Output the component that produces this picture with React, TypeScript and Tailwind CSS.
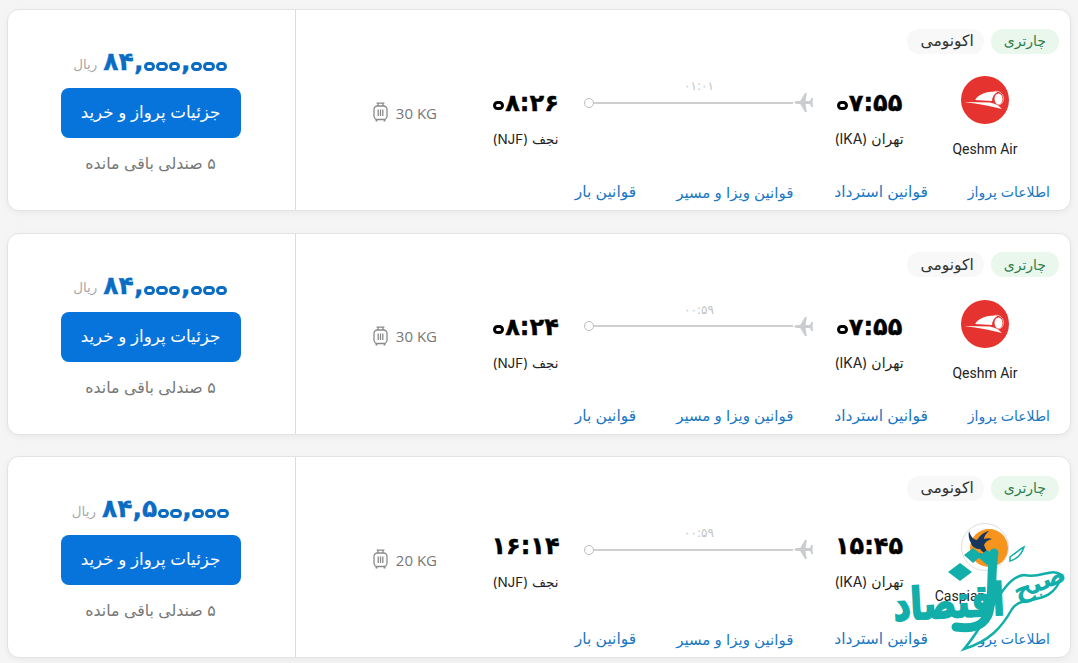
import React from "react";

const FONT = "font-['Inter','DejaVu_Sans',sans-serif]";

function Luggage() {
  return (
    <svg width="15" height="21" viewBox="0 0 15 21" fill="none" stroke="#8a8a8a" strokeWidth="1.3">
      <path d="M5 4V1.2h5V4M3.6 1.2h7.8" />
      <rect x="1" y="4" width="13" height="13.5" rx="3.5" />
      <path d="M5.2 7.5v6.5M7.5 7.5v6.5M9.8 7.5v6.5" />
      <path d="M3.5 17.5v2M11.5 17.5v2" strokeWidth="1.8" />
    </svg>
  );
}

function Plane() {
  return (
    <svg width="20" height="19" viewBox="0 0 20 19" fill="#c9cdcf">
      <path d="M0 9.5C1 8.3 3 8 5 8h1.200L11 0h1.800l-1.300 8H16l1.500-3H19l-.5 4.500.5 4.500h-1.500L16 11h-4.500l1.300 8H11l-4.800-8H5C3 11 1 10.700 0 9.500z" />
    </svg>
  );
}

function QeshmLogo() {
  return (
    <svg width="48" height="48" viewBox="0 0 48 48">
      <circle cx="24" cy="24" r="24" fill="#e5332f" />
      <path d="M14 24C18 18 25 15 37 15.500 33 18 31 21 31 25z" fill="#fff" />
      <ellipse cx="37.500" cy="23" rx="4" ry="5.500" fill="#fff" />
      <path d="M33 15.500c6-1.500 10 3 9.500 8-.4 3.500-3 6-6.500 5.500" fill="none" stroke="#f8b4b0" strokeWidth="1" />
      <path d="M3 26l26 .5c5 1 9 3 12 6.500C28 29.500 15 27.500 3 26z" fill="#fff" />
    </svg>
  );
}

function CaspianLogo() {
  return (
    <svg width="48" height="48" viewBox="0 0 48 48">
      <circle cx="24" cy="24" r="23.500" fill="#fff" stroke="#dedede" />
      <circle cx="28" cy="25" r="19" fill="#f7941d" />
      <path d="M8 8c2 5 3 8 8 9 2-3 6-8 12-9-3 3-5 5-5 8 3-1 6-1 8 0-4 1-7 3-8 6 1 4 4 7 6 10-5-1-8-3-10-6-4 0-8-2-9-6-2-3-3-8-2-12z" fill="#17375e" />
      <path d="M19 30l10 7-2 2-10-6z" fill="#17375e" />
    </svg>
  );
}

function Digits({ text, big }: { text: string; big?: boolean }) {
  return (
    <span className="inline-flex items-end" dir="ltr">
      {Array.from(text).map((c, i) =>
        c === "۰" ? (
          <span
            key={i}
            className={
              big
                ? "mx-[0.5px] mb-[6px] flex h-[9px] w-[11.5px] items-center justify-center overflow-hidden rounded-full border-[3px] border-[#0b6cc4] text-[5px] leading-none text-transparent [-webkit-text-stroke:0]"
                : "mx-[1px] mb-[7px] flex h-[9px] w-[11px] items-center justify-center overflow-hidden rounded-full border-[3px] border-black text-[5px] leading-none text-transparent [-webkit-text-stroke:0]"
            }
          >
            ۰
          </span>
        ) : (
          <span key={i}>{c}</span>
        )
      )}
    </span>
  );
}

type Flight = {
  price: string;
  kg: string;
  arr: string;
  dep: string;
  dur: string;
  airline: string;
  logo: React.ReactNode;
  mt: string;
};

function Card({ f }: { f: Flight }) {
  return (
    <div className={`flex h-[202px] flex-row-reverse rounded-xl border border-[#e3e3e3] bg-white shadow-[0_2px_6px_rgba(0,0,0,0.05)] ${f.mt}`} dir="ltr">
      <div className="flex min-w-0 flex-1 flex-col pr-[20px] pl-[76px] pt-[18px]" dir="rtl">
        <div className="-mr-[9px] flex h-[26px] items-center gap-[7px] leading-none">
          <span className="flex h-[25px] items-center rounded-[12px] bg-[#e9f7ec] px-[13px] text-[14px] text-[#2f7d4f]">چارتری</span>
          <span className="flex h-[25px] items-center rounded-[12px] bg-[#f8f8f8] pr-[10px] pl-[13px] text-[15.5px] text-[#333]">اکونومی</span>
        </div>
        <div className="mt-[22px] flex h-[95px] items-start pr-[32px]">
          <div className="flex w-[66px] flex-col items-center">
            {f.logo}
            <div className="mt-[16px] whitespace-nowrap font-['Roboto',sans-serif] text-[14px] leading-[18px] text-[#222]" dir="ltr">{f.airline}</div>
          </div>
          <div className="mr-[47px] flex w-[72px] flex-col items-center pt-[9px]">
            <div className="font-['DejaVu_Sans',sans-serif] text-[24px] font-bold leading-[28px] text-black [-webkit-text-stroke:0.4px_#000]"><Digits text={f.dep} /></div>
            <div className="mt-[13px] whitespace-nowrap text-[14px] leading-[18px] text-[#222]">تهران (IKA)</div>
          </div>
          <div className="mr-[19px] flex w-[230px] flex-col pt-[3px]">
            <div className="text-center font-['DejaVu_Sans',sans-serif] text-[12px] leading-[14px] text-[#c4c4c4]" dir="ltr">{f.dur}</div>
            <div className="flex items-center" dir="ltr">
              <span className="h-[10px] w-[10px] shrink-0 rounded-full border border-[#bdbdbd]" />
              <span className="mr-[1px] h-[2px] flex-1 bg-[#cfcfcf]" />
              <Plane />
            </div>
          </div>
          <div className="mr-[26px] flex w-[65px] flex-col items-center pt-[9px]">
            <div className="font-['DejaVu_Sans',sans-serif] text-[24px] font-bold leading-[28px] text-black [-webkit-text-stroke:0.4px_#000]"><Digits text={f.arr} /></div>
            <div className="mt-[13px] whitespace-nowrap text-[13.5px] leading-[18px] text-[#222]">نجف (NJF)</div>
          </div>
          <div className="mr-[56px] flex items-center gap-[8px] pt-[26px] text-[#777]" dir="ltr">
            <Luggage />
            <span className="whitespace-nowrap font-['Open_Sans',sans-serif] text-[15px] leading-[20px]">{f.kg}</span>
          </div>
        </div>
        <div className="mt-[10px] flex h-[22px] items-center leading-none text-[#1a78c2]">
          <span className="whitespace-nowrap text-[14px]">اطلاعات پرواز</span>
          <span className="mr-[40px] whitespace-nowrap text-[15.5px]">قوانین استرداد</span>
          <span className="mr-[41px] whitespace-nowrap text-[15px]">قوانین ویزا و مسیر</span>
          <span className="mr-[40px] whitespace-nowrap text-[15.5px]">قوانین بار</span>
        </div>
      </div>
      <div className="flex w-[288px] shrink-0 flex-col items-center rounded-l-xl border-r border-[#dcdcdc] pr-[2px] pt-[35px]" dir="rtl">
        <div className="flex h-[34px] items-center gap-[6px]">
          <span className="font-['DejaVu_Sans',sans-serif] text-[25px] font-bold leading-[30px] text-[#0b6cc4] [-webkit-text-stroke:0.3px_#0b6cc4]"><Digits text={f.price} big /></span>
          <span className="mt-[5px] text-[13.5px] leading-none text-[#aaa]">ریال</span>
        </div>
        <button className="mt-[9px] h-[50px] w-[180px] rounded-[8px] bg-[#0774dc] text-[16.7px] text-white">جزئیات پرواز و خرید</button>
        <div className="mt-[15px] text-[15.8px] leading-[22px] text-[#777]">۵ صندلی باقی مانده</div>
      </div>
    </div>
  );
}

const flights: Flight[] = [
  { price: "۸۴,۰۰۰,۰۰۰", kg: "30 KG", arr: "۰۸:۲۶", dep: "۰۷:۵۵", dur: "۰۱:۰۱", airline: "Qeshm Air", logo: <QeshmLogo />, mt: "" },
  { price: "۸۴,۰۰۰,۰۰۰", kg: "30 KG", arr: "۰۸:۲۴", dep: "۰۷:۵۵", dur: "۰۰:۵۹", airline: "Qeshm Air", logo: <QeshmLogo />, mt: "mt-[21.5px]" },
  { price: "۸۴,۵۰۰,۰۰۰", kg: "20 KG", arr: "۱۶:۱۴", dep: "۱۵:۴۵", dur: "۰۰:۵۹", airline: "Caspian Airlines", logo: <CaspianLogo />, mt: "mt-[21.5px]" },
];

function Watermark() {
  return (
    <div className="pointer-events-none absolute left-[890px] top-[515px] h-[140px] w-[180px] font-['DejaVu_Sans',sans-serif] font-bold text-[#12aeaa]" dir="rtl">
      <svg className="absolute left-0 top-0" width="180" height="140" viewBox="0 0 180 140">
        <path d="M74 134C100 126 112 112 122 94 132 78 162 94 172 60 160 52 152 64 134 60 112 62 100 104 74 134z" fill="#fff" stroke="#12aeaa" strokeWidth="2.500" />
        <path d="M120 42c6-4 10-8 14-10-2 6-6 12-14 14z" fill="#fff" stroke="#12aeaa" strokeWidth="1.500" />
        <path d="M58 57l12-9 12 9-12 9zM74 40l9-7 9 7-9 8zM88 42l9-7 9 7-9 8z" fill="#12aeaa" />
        <path d="M104 38C100 60 104 84 98 100 92 112 82 114 66 112" fill="none" stroke="#12aeaa" strokeWidth="9" strokeLinecap="round" />
      </svg>
      <span className="absolute left-[3px] top-[70px] scale-y-[1.300] -rotate-[3deg] text-[34px] leading-none [-webkit-text-stroke:1.500px_#12aeaa]">اقتصاد</span>
      <span className="absolute left-[122px] top-[54px] -rotate-[22deg] text-[26px] leading-none text-[#12aeaa]">صبح</span>
    </div>
  );
}

export default function App() {
  return (
    <div className={`relative h-[663px] w-[1078px] overflow-hidden bg-[#f5f5f5] px-[7px] pt-[9px] ${FONT}`}>
      {flights.map((f, i) => (
        <Card key={i} f={f} />
      ))}
      <Watermark />
    </div>
  );
}
